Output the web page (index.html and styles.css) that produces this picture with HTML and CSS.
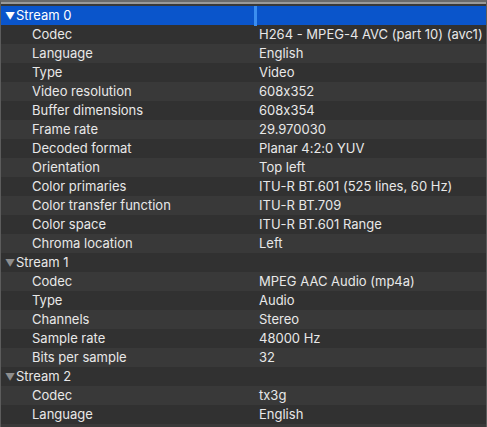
FILE: index.html
```html
<!DOCTYPE html>
<html lang="en">

<head>
    <meta charset="UTF-8" />
    <title>Codec details</title>
    <link rel="stylesheet" href="styles.css">
</head>

<body>
    <div class="panel">
        <div class="tree" id="tree"></div>
    </div>

    <script>
        let streams = [
            ["Stream 0", [
                ["Codec", "H264 - MPEG-4 AVC (part 10) (avc1)"],
                ["Language", "English"],
                ["Type", "Video"],
                ["Video resolution", "608x352"],
                ["Buffer dimensions", "608x354"],
                ["Frame rate", "29.970030"],
                ["Decoded format", "Planar 4:2:0 YUV"],
                ["Orientation", "Top left"],
                ["Color primaries", "ITU-R BT.601 (525 lines, 60 Hz)"],
                ["Color transfer function", "ITU-R BT.709"],
                ["Color space", "ITU-R BT.601 Range"],
                ["Chroma location", "Left"]
            ]],
            ["Stream 1", [
                ["Codec", "MPEG AAC Audio (mp4a)"],
                ["Type", "Audio"],
                ["Channels", "Stereo"],
                ["Sample rate", "48000 Hz"],
                ["Bits per sample", "32"]
            ]],
            ["Stream 2", [
                ["Codec", "tx3g"],
                ["Language", "English"]
            ]]
        ];
        let tree = document.getElementById("tree");
        let n = 0;
        streams.forEach((s, i) => {
            let cls = "row stream" + (n % 2 ? " odd" : "") + (i == 0 ? " selected" : "");
            tree.innerHTML += `<div class="${cls}"><span class="name"><span class="arrow">&#9660;</span>${s[0]}</span><span class="value"></span></div>`;
            n++;
            s[1].forEach((item) => {
                let c = "row" + (n % 2 ? " odd" : "");
                tree.innerHTML += `<div class="${c}"><span class="name">${item[0]}</span><span class="value">${item[1]}</span></div>`;
                n++;
            });
        });
    </script>
</body>

</html>
```

FILE: styles.css
```css
body {
    margin: 0;
    background-color: #393939;
    font-family: Inter, "Liberation Sans", sans-serif;
    font-size: 13px;
    font-feature-settings: "calt" 0;
    color: #e8e8e8;
}

.panel {
    height: 427px;
    box-sizing: border-box;
    border-top: 2px solid #6a6a6a;
    border-left: 1px solid #5c5c5c;
    border-right: 1px solid #5c5c5c;
    background-color: #393939;
    overflow: hidden;
}

.tree {
    border-top: 2px solid #9a9a9a;
    padding-top: 2px;
}

.row {
    display: grid;
    grid-template-columns: 253px 1fr;
    height: 19px;
    line-height: 19px;
    background-color: #393939;
    white-space: nowrap;
}

.row.odd {
    background-color: #313131;
}

.row .name {
    padding-left: 31px;
}

.row .value {
    padding-left: 5px;
}

.stream .name {
    padding-left: 4px;
}

.arrow {
    display: inline-block;
    width: 11px;
    font-size: 10px;
    color: #8e8e8e;
}

.selected {
    background-color: #0a55cb;
    color: #ffffff;
}

.selected .arrow {
    color: #ffffff;
}

.selected .value {
    border-left: 3px solid #3b8ef0;
}
```
